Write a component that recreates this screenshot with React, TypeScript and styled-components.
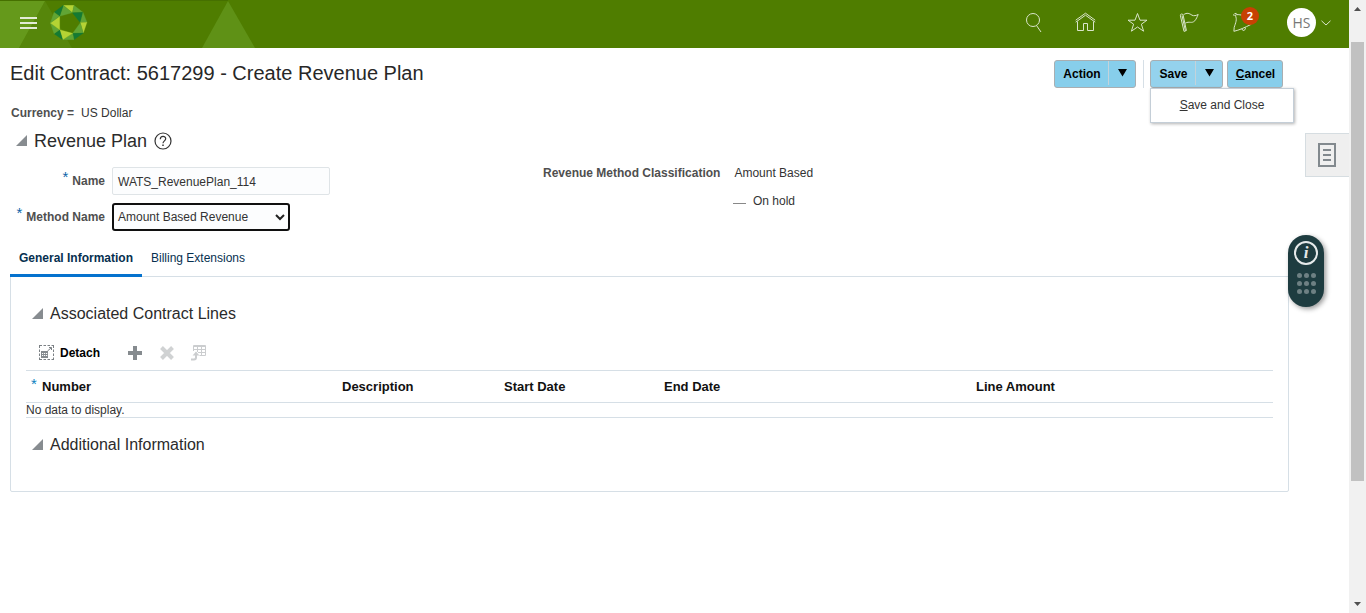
import React from "react";
import styled, { createGlobalStyle, css } from "styled-components";

const Global = createGlobalStyle`
  * { box-sizing: border-box; }
  html, body { margin: 0; padding: 0; overflow: hidden; background: #fff; }
  body { font-family: "Liberation Sans", Arial, sans-serif; font-size: 12px; color: #333; }
`;

const Window = styled.div`
  display: flex;
  width: 1366px;
  height: 613px;
  overflow: hidden;
`;

const Page = styled.div`
  position: relative;
  display: flex;
  flex-direction: column;
  width: 1349px;
  height: 613px;
`;

const Header = styled.header`
  position: relative;
  display: flex;
  align-items: center;
  height: 48px;
  flex: none;
  background: #4f7d00;
`;

const HeaderArt = styled.svg`
  position: absolute;
  left: 0;
  top: 0;
`;

const Brand = styled.div`
  position: relative;
  display: flex;
  align-items: center;
  padding: 0 0 2px 20px;
  gap: 13px;
  flex: 1;
`;

const Burger = styled.div`
  display: flex;
  flex-direction: column;
  gap: 3px;
  width: 17px;
`;

const BurgerBar = styled.span`
  height: 2px;
  background: #e3ecd6;
`;

const Actions = styled.div`
  display: flex;
  align-items: center;
  gap: 28px;
  margin-right: 34px;
  margin-top: -4px;
`;

const IconSlot = styled.div`
  position: relative;
  display: flex;
  width: 24px;
  height: 24px;
`;

const Badge = styled.span`
  position: absolute;
  left: 12px;
  top: -3px;
  width: 18px;
  height: 18px;
  border-radius: 9px;
  background: #c74103;
  color: #fff;
  font: bold 11px/18px "Open Sans", sans-serif;
  text-align: center;
`;

const User = styled.div`
  display: flex;
  align-items: center;
  gap: 5px;
  margin-right: 18px;
  margin-top: -3px;
`;

const Avatar = styled.div`
  width: 29px;
  height: 29px;
  border-radius: 50%;
  background: #fff;
  color: #777;
  font: 14px/30px "Open Sans", sans-serif;
  text-align: center;
`;

const TitleRow = styled.div`
  display: flex;
  justify-content: space-between;
  height: 53px;
  padding: 12px 66px 0 10px;
`;

const Title = styled.h1`
  margin: 0;
  font-size: 20px;
  line-height: 26px;
  font-weight: normal;
  color: #272727;
`;

const Buttons = styled.div`
  display: flex;
  align-items: flex-start;
`;

const Button = styled.div<{ $w: number; $light?: boolean }>`
  position: relative;
  display: flex;
  width: ${(p) => p.$w}px;
  height: 28px;
  border: 1px solid #a9aeb1;
  border-radius: 3px;
  background: ${(p) => (p.$light ? "#94d2ed" : "#87ceeb")};
  color: #000;
  font-weight: bold;
  line-height: 26px;
`;

const ButtonText = styled.span<{ $w: number }>`
  width: ${(p) => p.$w}px;
  padding-left: 1px;
  text-align: center;
  white-space: nowrap;
`;

const Arrow = styled.span`
  display: flex;
  flex: 1;
  height: 24px;
  justify-content: center;
  padding-top: 8px;
  border-left: 1px solid #c3d3db;
`;

const Divider = styled.span`
  width: 1px;
  height: 28px;
  margin: 0 6px 0 7px;
  background: #d6dfe6;
`;

const Spacer = styled.span`
  width: 4px;
`;

const Menu = styled.div`
  position: absolute;
  left: -1px;
  top: 27px;
  width: 144px;
  height: 35px;
  border: 1px solid #c4ced7;
  background: #fff;
  box-shadow: 1px 1px 3px rgba(0, 0, 0, 0.3);
  color: #333;
  font-weight: normal;
  line-height: 33px;
  text-align: center;
`;

const Currency = styled.div`
  display: flex;
  gap: 7px;
  padding-left: 11px;
  height: 28px;
  line-height: 24px;
`;

const Label = styled.span`
  color: #4f4f4f;
  font-weight: bold;
  white-space: nowrap;
`;

const Heading = styled.div<{ $size: number; $left: number; $h: number }>`
  display: flex;
  align-items: center;
  gap: 7px;
  height: ${(p) => p.$h}px;
  padding-left: ${(p) => p.$left}px;
  font-size: ${(p) => p.$size}px;
  color: #2b2b2b;
`;

const Form = styled.div`
  display: flex;
  height: 81px;
  padding-top: 14px;
`;

const FormColumn = styled.div<{ $w: number; $gap: number }>`
  display: flex;
  flex-direction: column;
  gap: ${(p) => p.$gap}px;
  width: ${(p) => p.$w}px;
`;

const Field = styled.div`
  display: flex;
  align-items: center;
  height: 28px;
`;

const FieldLabel = styled.div`
  display: flex;
  justify-content: flex-end;
  gap: 4px;
  width: 105px;
  margin-right: 7px;
`;

const Star = styled.span`
  color: #0b64a8;
  font-size: 15px;
  line-height: 14px;
  margin-top: -4px;
  height: 14px;
`;

const Input = styled.div`
  width: 218px;
  height: 28px;
  padding-left: 5px;
  border: 1px solid #dfe4e7;
  border-radius: 2px;
  background: #fcfdfe;
  line-height: 28px;
`;

const Select = styled.div`
  display: flex;
  align-items: center;
  justify-content: space-between;
  width: 178px;
  height: 28px;
  padding: 0 3px 0 4px;
  border: 2px solid #101010;
  border-radius: 3px;
  background: #fcfdfe;
`;

const InfoRow = styled.div<{ $indent: number; $gap: number }>`
  display: flex;
  gap: ${(p) => p.$gap}px;
  height: 12px;
  line-height: 12px;
  padding-left: ${(p) => p.$indent}px;
`;

const Dash = styled.span`
  width: 13px;
  height: 1px;
  margin-top: 8px;
  background: #888;
`;

const Tabs = styled.div`
  position: relative;
  display: flex;
  height: 38px;
  margin: 5px 0 0 10px;
  z-index: 1;
`;

const Tab = styled.div<{ $active?: boolean; $w: number }>`
  width: ${(p) => p.$w}px;
  height: 38px;
  line-height: 39px;
  text-align: center;
  color: #06304f;
  border-bottom: 3px solid transparent;
  ${(p) =>
    p.$active &&
    css`
      font-weight: bold;
      border-bottom-color: #0572ce;
    `}
`;

const Panel = styled.section`
  width: 1279px;
  height: 216px;
  margin: -1px 0 0 10px;
  padding: 23px 15px 0;
  border: 1px solid #d6dfe6;
  border-radius: 0 0 2px 2px;
`;

const Toolbar = styled.div`
  display: flex;
  align-items: center;
  height: 43px;
  padding: 8px 0 0 13px;
`;

const ToolText = styled.span`
  width: 74px;
  padding-left: 6px;
  color: #000;
  font-weight: bold;
`;

const ToolIcon = styled.svg<{ $after: number }>`
  margin-right: ${(p) => p.$after}px;
  flex: none;
`;

const Table = styled.div`
  border-top: 1px solid #d6dfe6;
  border-bottom: 1px solid #d6dfe6;
`;

const HeadRow = styled.div`
  display: grid;
  grid-template-columns: 316px 162px 160px 312px 1fr;
  height: 32px;
  border-bottom: 1px solid #d6dfe6;
  line-height: 31px;
  font-weight: bold;
  font-size: 13px;
  color: #111;
`;

const HeadCell = styled.div`
  display: flex;
  gap: 5px;
`;

const HeadStar = styled.span`
  width: 6px;
  margin-left: 5px;
  margin-top: -3px;
  color: #0b7fc0;
  font-size: 15px;
  font-weight: normal;
`;

const Empty = styled.div`
  height: 14px;
  line-height: 14px;
`;

const SideTab = styled.div`
  position: absolute;
  right: 0;
  top: 133px;
  display: flex;
  width: 44px;
  height: 44px;
  padding: 9px 0 0 12px;
  border: 1px solid #d6dde1;
  border-right: 0;
  background: #efefef;
`;

const Widget = styled.div`
  position: absolute;
  left: 1288px;
  top: 235px;
  z-index: 2;
  width: 36px;
  height: 72px;
  border-radius: 18px;
  background: #1e3c40;
  box-shadow: 2px 2px 5px rgba(0, 0, 0, 0.4);
  display: flex;
  flex-direction: column;
  align-items: center;
  gap: 8px;
  padding-top: 6px;
`;

const Info = styled.div`
  width: 24px;
  height: 24px;
  border: 2px solid #e6eaea;
  border-radius: 50%;
  color: #e6eaea;
  font: italic bold 17px/20px "Liberation Serif", serif;
  text-align: center;
`;

const Dots = styled.div`
  display: grid;
  grid-template-columns: repeat(3, 5px);
  row-gap: 3px;
  column-gap: 2px;
`;

const Dot = styled.span`
  height: 5px;
  border-radius: 50%;
  background: #6e8083;
`;

const Scrollbar = styled.div`
  display: flex;
  flex-direction: column;
  align-items: center;
  justify-content: space-between;
  width: 17px;
  height: 613px;
  background: #f1f1f1;
  padding: 7px 0;
`;

const Thumb = styled.div`
  width: 13px;
  height: 439px;
  margin: 31px 0 auto;
  background: #c1c1c1;
`;

const FACETS: [string, string][] = [
  ["190,17 222,17 217,39", "#b5d334"],
  ["190,17 217,39 179,50", "#61a534"],
  ["162,38 190,17 179,50", "#147a33"],
  ["222,17 249,38 217,39", "#61a534"],
  ["217,39 249,38 241,69", "#147a33"],
  ["249,38 261,68 241,69", "#61a534"],
  ["241,69 261,68 250,100", "#b5d334"],
  ["241,69 250,100 218,101", "#61a534"],
  ["218,101 250,100 222,120", "#147a33"],
  ["218,101 222,120 188,120", "#61a534"],
  ["218,101 188,120 179,90", "#b5d334"],
  ["179,90 188,120 162,102", "#147a33"],
  ["179,90 162,102 151,70", "#61a534"],
  ["179,50 179,90 151,70", "#b5d334"],
  ["151,70 162,38 179,50", "#61a534"],
];

const Logo = () => (
  <svg width="38" height="36" viewBox="150 16 114 108">
    {FACETS.map(([points, fill]) => (
      <polygon key={points} points={points} fill={fill} stroke={fill} strokeWidth="0.8" />
    ))}
  </svg>
);

const line = { fill: "none", stroke: "#d9e5ca", strokeWidth: 1 };

const SearchIcon = () => (
  <svg width="24" height="24" {...line}>
    <circle cx="12.5" cy="9.5" r="6.5" transform="translate(-.5 .5)" />
    <path d="M15.6 15.6 20 22" />
  </svg>
);

const HomeIcon = () => (
  <svg width="24" height="24" {...line}>
    <path d="M2.7 12.2 12.5 5.2 22.2 12.2M2.7 10.2 12.5 3.2 22.2 10.2M4.5 11.5V20.5H10.5V13.5H14.5V20.5H20.5V11.5" />
  </svg>
);

const StarIcon = () => (
  <svg width="24" height="24" {...line}>
    <path d="M12.5 3.5 15 10.2H22L16.4 14.2 18.6 21.2 12.5 17 6.4 21.2 8.6 14.2 3 10.2H10Z" />
  </svg>
);

const FlagIcon = () => (
  <svg width="24" height="24" {...line}>
    <path d="M3.4 5.7a1.2 1.2 0 0 1 2.7-.6L9.4 20.5 7 21.4Z M5 5.5 8.4 20.8 M6.5 4.8C10 2.2 12.5 3.5 15 5.2 17 6.2 19 5.6 21.2 4.5 20 7 19.5 8.7 17.8 10.8 14.5 14 12.5 10.8 8.2 13.2" />
  </svg>
);

const BellIcon = () => (
  <svg width="24" height="24" {...line}>
    <path d="M6.2 5.2C8.5 9.5 6.5 13 5.2 17.3L4.9 21.3C10 20.2 16 17.5 22.2 14.3M6.2 5.2C8 4.2 10 4.6 13 5.2M5.2 6A1.6 1.6 0 1 1 8 4.6M13 19C13.5 21.7 16.8 20.4 16.4 17.6" />
  </svg>
);

const Down = () => (
  <svg width="9" height="8">
    <path d="M0 0H9L4.5 7.5Z" fill="#000" />
  </svg>
);

const Disclosure = () => (
  <svg width="11" height="12">
    <path d="M11 0V11H0Z" fill="#878c90" />
  </svg>
);

const HelpIcon = () => (
  <svg width="18" height="18" fill="none" stroke="#333" strokeWidth="1.2">
    <circle cx="9" cy="9" r="8" />
    <path d="M6.3 7.2C6.3 3.4 11.8 3.5 11.7 6.8 11.7 8.8 9 9 9 11.3" />
    <path d="M9 12.5V14" strokeWidth="1.5" />
  </svg>
);

const DetachIcon = () => (
  <ToolIcon $after={0} width="15" height="15" fill="none" stroke="#7b8084">
    <path d="M0 .5H3M4.5 .5H7M8.5 .5H11M12.5 .5H15M0 14.5H3M4.5 14.5H7M8.5 14.5H11M12.5 14.5H15M.5 0V3M.5 4.5V7M.5 8.5V11M.5 12.5V15M14.5 0V3M14.5 4.5V7M14.5 8.5V11M14.5 12.5V15" />
    <path d="M8.5 6 12.3 2.7M10 2.5H12.5V5" />
    <path d="M2 6H9V13H2Z" fill="#858a8e" stroke="none" />
    <path d="M3 8.5H4.2M5 8.5H6.2M7 8.5H8.2M3 10.5H4.2M5 10.5H6.2M7 10.5H8.2" stroke="#fff" />
  </ToolIcon>
);

const PlusIcon = () => (
  <ToolIcon $after={18} width="14" height="14">
    <path d="M5 0H9V5H14V9H9V14H5V9H0V5H5Z" fill="#868b8f" />
  </ToolIcon>
);

const RemoveIcon = () => (
  <ToolIcon $after={17} width="14" height="14">
    <path d="M1.5 1.5 12.5 12.5M12.5 1.5 1.5 12.5" stroke="#d0d2d3" strokeWidth="4" />
  </ToolIcon>
);

const PivotIcon = () => (
  <ToolIcon $after={0} width="16" height="16" fill="none" stroke="#cbcdcf">
    <path d="M2.5 6V.5H14.5V10.5H8.5M2.5 1.5H14.5M2.5 4.5H14.5M7 7.5H14.5M6.5 1V7M10.5 1V10.5" />
    <path d="M0 14.5H3Q5 14.5 5 12.5V9" strokeWidth="2" />
    <path d="M1.6 10.5 5 6.5 8.4 10.5Z" fill="#cbcdcf" stroke="none" />
  </ToolIcon>
);

const COLUMNS = ["Description", "Start Date", "End Date", "Line Amount"];

export default function App() {
  return (
    <Window>
      <Global />
      <Page>
        <Header>
          <HeaderArt width="300" height="48">
            <path d="M45 1 19 48H72Z" fill="#56860b" />
            <path d="M0 1H45L19 48H0Z" fill="#65991b" />
            <path d="M228 1 202 48H255Z" fill="#5f9116" />
            <path d="M0 .5H228" stroke="#467000" />
          </HeaderArt>
          <Brand>
            <Burger>
              <BurgerBar />
              <BurgerBar />
              <BurgerBar />
            </Burger>
            <Logo />
          </Brand>
          <Actions>
            {[SearchIcon, HomeIcon, StarIcon, FlagIcon].map((Icon, i) => (
              <IconSlot key={i}>
                <Icon />
              </IconSlot>
            ))}
            <IconSlot>
              <BellIcon />
              <Badge>2</Badge>
            </IconSlot>
          </Actions>
          <User>
            <Avatar>HS</Avatar>
            <svg width="10" height="6" {...line}>
              <path d="M.5 .8 5 5 9.5 .8" />
            </svg>
          </User>
        </Header>

        <TitleRow>
          <Title>Edit Contract: 5617299 - Create Revenue Plan</Title>
          <Buttons>
            <Button $w={82}>
              <ButtonText $w={53}>Action</ButtonText>
              <Arrow><Down /></Arrow>
            </Button>
            <Divider />
            <Button $w={73} $light>
              <ButtonText $w={44}>Save</ButtonText>
              <Arrow><Down /></Arrow>
              <Menu><u>S</u>ave and Close</Menu>
            </Button>
            <Spacer />
            <Button $w={56}>
              <ButtonText $w={54}><u>C</u>ancel</ButtonText>
            </Button>
          </Buttons>
        </TitleRow>

        <Currency>
          <Label>Currency =</Label>
          <span>US Dollar</span>
        </Currency>
        <Heading $size={18} $left={16} $h={24}>
          <Disclosure />
          Revenue Plan
          <HelpIcon />
        </Heading>

        <Form>
          <FormColumn $w={543} $gap={8}>
            <Field>
              <FieldLabel><Star>*</Star><Label>Name</Label></FieldLabel>
              <Input>WATS_RevenuePlan_114</Input>
            </Field>
            <Field>
              <FieldLabel><Star>*</Star><Label>Method Name</Label></FieldLabel>
              <Select>
                Amount Based Revenue
                <svg width="10" height="7" fill="none" stroke="#222" strokeWidth="2">
                  <path d="M1 1 5 5 9 1" />
                </svg>
              </Select>
            </Field>
          </FormColumn>
          <FormColumn $w={400} $gap={16}>
            <InfoRow $indent={0} $gap={14}>
              <Label>Revenue Method Classification</Label>
              <span>Amount Based</span>
            </InfoRow>
            <InfoRow $indent={190} $gap={7}>
              <Dash />
              <span>On hold</span>
            </InfoRow>
          </FormColumn>
        </Form>

        <Tabs>
          <Tab $active $w={132}>General Information</Tab>
          <Tab $w={112}>Billing Extensions</Tab>
        </Tabs>
        <Panel>
          <Heading $size={16} $left={6} $h={27}>
            <Disclosure />
            Associated Contract Lines
          </Heading>
          <Toolbar>
            <DetachIcon />
            <ToolText>Detach</ToolText>
            <PlusIcon />
            <RemoveIcon />
            <PivotIcon />
          </Toolbar>
          <Table>
            <HeadRow>
              <HeadCell><HeadStar>*</HeadStar>Number</HeadCell>
              {COLUMNS.map((c) => (
                <HeadCell key={c}>{c}</HeadCell>
              ))}
            </HeadRow>
            <Empty>No data to display.</Empty>
          </Table>
          <Heading $size={16} $left={6} $h={53}>
            <Disclosure />
            Additional Information
          </Heading>
        </Panel>

        <SideTab>
          <svg width="18" height="24" fill="none" stroke="#82898e" strokeWidth="2">
            <path d="M1 1H17V23H1ZM5 7H13M5 12H13M5 17H13" />
          </svg>
        </SideTab>
        <Widget>
          <Info>i</Info>
          <Dots>
            {Array.from({ length: 9 }, (_, i) => (
              <Dot key={i} />
            ))}
          </Dots>
        </Widget>
      </Page>
      <Scrollbar>
        <svg width="7" height="4"><path d="M0 4 3.5 0 7 4Z" fill="#505050" /></svg>
        <Thumb />
        <svg width="7" height="4"><path d="M0 0 3.5 4 7 0Z" fill="#505050" /></svg>
      </Scrollbar>
    </Window>
  );
}
